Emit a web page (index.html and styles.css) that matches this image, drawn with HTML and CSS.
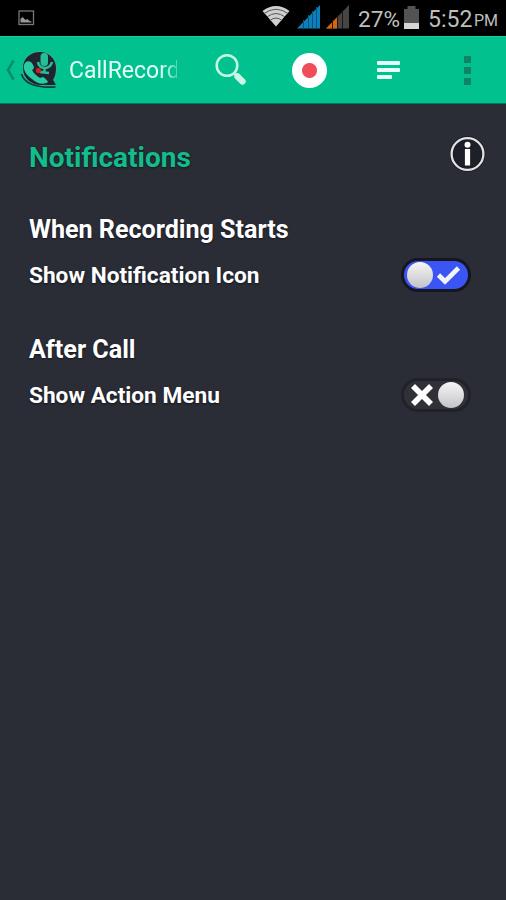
FILE: index.html
```html
<!DOCTYPE html>
<html lang="en">
<head>
<meta charset="utf-8">
<title>CallRecorder</title>
<link rel="stylesheet" href="styles.css">
</head>
<body>
<div class="status">
  <svg class="shot" width="17" height="16" viewBox="0 0 17 16"><rect x="1" y="1" width="14.5" height="13.5" fill="none" stroke="#777" stroke-width="1.3"/><path d="M2.500 12.500V9l2-2 3 3 2-1 2 2 2 .5v1z" fill="#999"/></svg>
  <svg class="wifi" width="28" height="22" viewBox="0 0 28 22"><path d="M.5 6Q14-4 27.500 6L14 21.500Z" fill="#d0d0d0"/><path d="M2 8.500Q14 0 26 8.500M5 12Q14 5 23 12M8 15.500Q14 10.500 20 15.500" fill="none" stroke="#555" stroke-width="1"/></svg>
  <svg class="sig" width="24" height="24" viewBox="0 0 24 24"><path d="M0 23.500 23 0v23.500z" fill="#0d80bb"/><path d="M6.500 15v9M11.500 10v14M15.500 6v18M19.500 2v22" stroke="#07537c" stroke-width="1"/></svg>
  <svg class="sig sig2" width="24" height="24" viewBox="0 0 24 24"><path d="M0 23.500 23 0v23.500z" fill="#454545"/><path d="M0 23.500 11.500 11.800v11.700z" fill="#d9640f"/><path d="M6.500 15v9M11.500 10v14M16.500 5v19" stroke="#1c1512" stroke-width="1"/></svg>
  <span class="pct">27%</span>
  <svg class="batt" width="16" height="24" viewBox="0 0 16 24"><path d="M0 23V3h3.500V0h8v3H15v20z" fill="#535353"/><path d="M0 17h15v6H0z" fill="#d5d5d5"/></svg>
  <span class="time">5:52</span><span class="pm">PM</span>
</div>
<header class="bar">
  <svg class="back" width="9" height="22" viewBox="0 0 9 22"><path d="M7.500 1.500 2 11l5.500 9.500" fill="none" stroke="#078c6b" stroke-width="2.500"/></svg>
  <svg class="logo" width="40" height="42" viewBox="0 0 40 42"><circle cx="20" cy="19.500" r="18" fill="#1fb98f"/><path d="M20 3c9 0 16 7 16 16 0 5-1 9-3 12l3 5H21C11 36 3 29 3 19S11 3 20 3z" fill="#20242f"/><path d="M1.500 25c3 10 15 14 34 13" fill="none" stroke="#14372f" stroke-width="1.600"/><path d="M4 16c1-4 5-5 8-2l2 4c0 2-1 2-2 3 2 4 5 6 8 8l3-1c2 1 4 3 5 5-4 3-11 2-16-3C6 26 3 21 4 16z" fill="#27cca2"/><rect x="20.500" y="4" width="7.500" height="13" rx="3.500" fill="#24bf96"/><path d="M18 13c1 8 12 8 14 0M25 18l-1 6M20 23l9 1" fill="none" stroke="#24bf96" stroke-width="2.600"/><circle cx="18.500" cy="21.500" r="2.600" fill="#d71c29"/></svg>
  <span class="title">CallRecorder</span>
  <svg class="search" width="34" height="34" viewBox="0 0 34 34"><circle cx="13" cy="12.500" r="10.300" fill="none" stroke="#c9f7e5" stroke-width="2.500"/><path d="m19.500 19.500 4 4" stroke="#c9f7e5" stroke-width="2.500"/><path d="m23.500 23.500 5 5" stroke="#c9f7e5" stroke-width="6.400" stroke-linecap="round"/></svg>
  <span class="record"></span>
  <span class="lines"><i></i><i></i><i></i></span>
  <span class="more"><i></i><i></i><i></i></span>
</header>
<main>
  <div class="row head"><h1>Notifications</h1>
    <svg width="36" height="36" viewBox="0 0 36 36"><circle cx="17.500" cy="18" r="16" fill="#1e2029" stroke="#17181f" stroke-width="3.600"/><circle cx="17.500" cy="18" r="15.900" fill="none" stroke="#e2e2e4" stroke-width="2.300"/><circle cx="17.500" cy="8.800" r="3" fill="#fff"/><path d="M14.900 13h5.200v16.500h-5.200z" fill="#fff"/></svg>
  </div>
  <h2>When Recording Starts</h2>
  <div class="row"><span class="label">Show Notification Icon</span>
    <span class="toggle on"><b></b><svg width="26" height="22" viewBox="0 0 26 22"><path d="m2.500 11 6.500 6.500L22.500 4" fill="none" stroke="#f4f4f8" stroke-width="4.600"/></svg></span>
  </div>
  <h2 class="after">After Call</h2>
  <div class="row"><span class="label">Show Action Menu</span>
    <span class="toggle off"><svg width="24" height="24" viewBox="0 0 24 24"><path d="m3 3 18 18m0-18-18 18" stroke="#fff" stroke-width="5.600"/></svg><b></b></span>
  </div>
</main>
</body>
</html>
```
FILE: styles.css
```css
* { box-sizing: border-box; }
body { margin: 0; height: 900px; display: flex; flex-direction: column; background: #2a2c36; color: #fff; font-family: Roboto, sans-serif; overflow: hidden; }
svg { display: block; flex: none; }
i { display: block; }
.status { height: 36px; flex: none; display: flex; align-items: flex-start; background: #000; color: #bebebe; white-space: nowrap; }
.shot { margin: 10px 0 0 18px; }
.wifi { margin: 5px 0 0 227px; }
.sig { margin: 5px 0 0 7px; }
.sig2 { margin-left: 5px; }
.pct { width: 42px; margin: 5px 0 0 8px; font-size: 22.6px; line-height: 29px; }
.batt { margin: 6px 0 0 4px; }
.time { width: 44px; margin: 6px 0 0 8px; font-size: 23px; line-height: 28px; }
.pm { margin: 8px 0 0 2px; font-size: 16px; line-height: 25px; }
.bar { height: 68px; flex: none; display: flex; align-items: center; background: #01c28f; border-top: 1px solid #16cc9c; border-bottom: 1px solid #087758; }
.back { margin-left: 6px; }
.logo { margin-left: 5px; }
.title { margin: 2px 0 0 9px; width: 108px; overflow: hidden; white-space: nowrap; font-size: 23px; line-height: 30px; color: #e3fff6; -webkit-mask-image: linear-gradient(90deg, #000 85%, transparent 108%); mask-image: linear-gradient(90deg, #000 85%, transparent 108%); }
.search { margin-left: 37px; }
.record { width: 35px; height: 35px; margin-left: 44px; border-radius: 50%; background: radial-gradient(circle, #f04d5a 7px, #fff 8px); }
.lines { margin-left: 50px; width: 23px; display: grid; gap: 3px; }
.lines i { height: 4px; background: #e3fff7; border-radius: 1px; }
.lines i:last-child { width: 15px; }
.more { margin-left: 64px; display: grid; gap: 4px; }
.more i { width: 7px; height: 7px; background: #128265; }
main { padding: 31px 20px 0 29px; text-shadow: 0 1px 2px #14151c; }
.row { display: flex; justify-content: space-between; align-items: center; }
.head { height: 38px; }
h1 { margin: 8px 0 0; font-size: 28px; line-height: 34px; color: #12bd8d; }
h2 { margin: 42px 0 0; font-size: 25.1px; line-height: 30px; }
.row + .after { margin-top: 42px; }
.label { font-size: 22.65px; line-height: 34px; font-weight: 700; }
h2 + .row { height: 34px; margin-top: 14px; }
.toggle { width: 70px; height: 34px; margin: -2px 15px 0 0; border-radius: 17px; display: flex; align-items: center; border: 3px solid #15161e; }
.on { background: #3b55f5; }
.off { background: #303138; border-color: #212229; }
.toggle b { width: 26px; height: 26px; border-radius: 50%; background: linear-gradient(#f6f6f6, #c3c3c6); }
.on b { margin-left: 3px; }
.on svg { margin-left: 3px; }
.off svg { margin-left: 6px; }
.off b { margin-left: 4px; }
```
